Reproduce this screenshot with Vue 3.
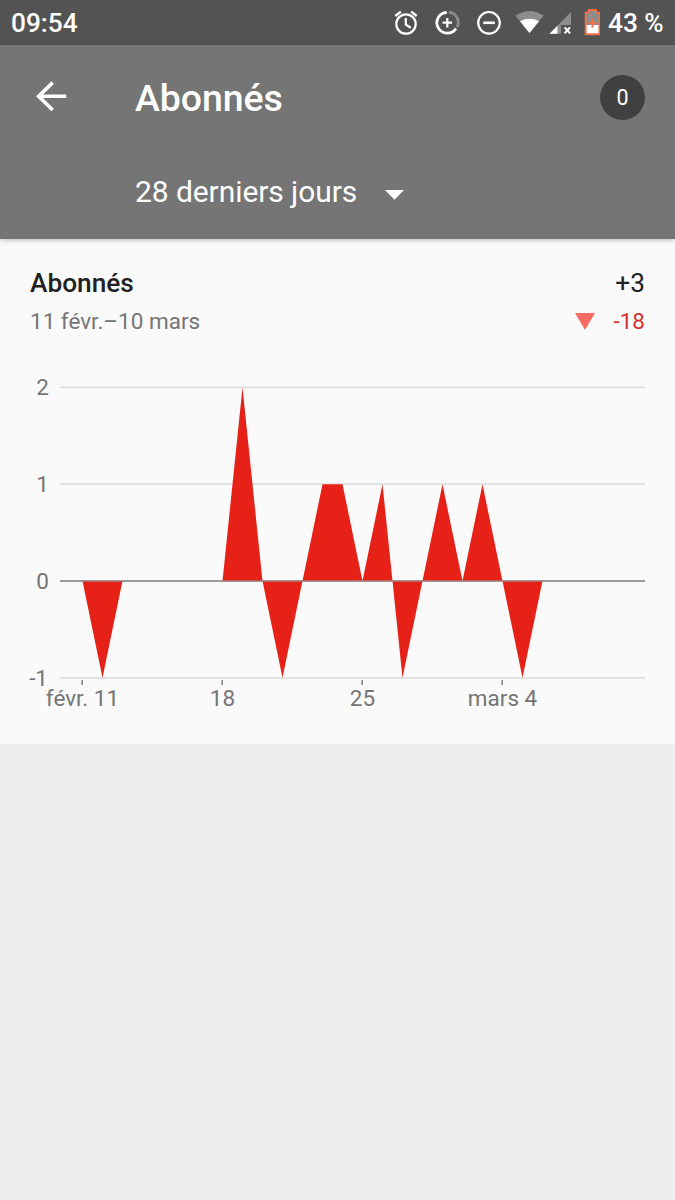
<script setup>
import { computed } from 'vue'

const values = [0, -1, 0, 0, 0, 0, 0, 0, 2, 0, -1, 0, 1, 1, 0, 1, -1, 0, 1, 0, 1, 0, -1, 0]
const gridValues = [2, 1, 0, -1]
const ticks = [
  { day: 0, label: 'févr. 11' },
  { day: 7, label: '18' },
  { day: 14, label: '25' },
  { day: 21, label: 'mars 4' }
]

function x(day) {
  return 82.5 + day * 20
}

function y(value) {
  return 221 - value * 96.8
}

const area = computed(() => {
  const points = values.map((value, day) => `${x(day)},${y(value)}`)
  return [`${x(0)},${y(0)}`, ...points, `${x(values.length - 1)},${y(0)}`].join(' ')
})
</script>

<template>
  <div class="screen">
    <div class="status-bar">
      <span class="time">09:54</span>
      <svg class="status-icons" width="210" height="45" viewBox="390 0 210 45">
        <!-- alarm -->
        <g fill="none" stroke="#fff" stroke-width="2.2">
          <circle cx="406" cy="24" r="9.7" />
          <path d="M405.8 18v6.7l5 3" />
          <path d="M395.3 16l5.5-4.4M416.7 16l-5.5-4.4" stroke-width="2.4" />
        </g>
        <!-- data saver -->
        <g fill="none" stroke="#fff">
          <path d="M449 12.2a10.4 10.4 0 0 1 8.2 14.9" stroke="#8b8b8b" stroke-width="2.8" />
          <path d="M446.8 12.3a10.4 10.4 0 1 0 9.2 16.1" stroke-width="2.8" />
          <path d="M447.3 18v9.4M442.6 22.7h9.4" stroke-width="2.2" />
        </g>
        <!-- do not disturb -->
        <g fill="none" stroke="#fff" stroke-width="2.2">
          <circle cx="489" cy="22.8" r="10.8" />
          <path d="M483.2 22.8h11.6" stroke-width="2.6" />
        </g>
        <!-- wifi -->
        <path d="M515.3 15.6q14.2-9.4 28.4 0L529.5 33z" fill="#8d8d8d" />
        <path d="M520 21.2q9.6-4.7 19 0L529.5 33z" fill="#fff" />
        <!-- mobile signal -->
        <path d="M549.5 33.8L571 12v13h-10v8.8z" fill="#8d8d8d" />
        <path d="M549.5 33.8L557.5 25.8v8z" fill="#fff" />
        <path d="M564.6 27.4l5.4 5.8M570 27.4l-5.4 5.8" stroke="#fff" stroke-width="2" />
        <!-- battery -->
        <path d="M585.7 12.5h3.3V10h7v2.5h3.4v22h-13.7z" fill="#8d8d8d" />
        <path d="M586 25h13.5v9H586z" fill="#fff" />
        <path d="M585.7 12.5h3.3V10h7v2.5h3.4v21.7h-13.7z" fill="none" stroke="#f0704a" stroke-width="1.9" />
        <path d="M592.5 18.5v9M588.7 23h7.6" stroke="#f0704a" stroke-width="2" />
      </svg>
      <span class="battery">43 %</span>
    </div>

    <header class="app-bar">
      <div class="title-row">
        <svg class="back" width="32" height="32" viewBox="0 0 32 32">
          <path d="M31.3 15.3H4M17.7 1.6L3.6 15.3l14.1 13.7" fill="none" stroke="#fff" stroke-width="3.6" />
        </svg>
        <h1>Abonnés</h1>
        <span class="badge">0</span>
      </div>
      <div class="period">
        <span>28 derniers jours</span>
        <svg width="19" height="10" viewBox="0 0 19 10">
          <path d="M0 0h19L9.5 9.7z" fill="#fff" />
        </svg>
      </div>
    </header>

    <main class="card">
      <div class="row heading">
        <h2>Abonnés</h2>
        <span>+3</span>
      </div>
      <div class="row dates">
        <span>11 févr.–10 mars</span>
        <span class="change">
          <svg width="20" height="17" viewBox="0 0 20 17">
            <path d="M0 0h20L10 17z" fill="#f66c64" />
          </svg>
          -18
        </span>
      </div>
      <svg class="chart" width="675" height="384" viewBox="0 0 675 384">
        <g v-for="value in gridValues" :key="value">
          <path :d="`M60 ${y(value)}H645`" :class="value === 0 ? 'zero-line' : 'grid-line'" />
          <text :x="value < 0 ? 48 : 49" :y="y(value) + 8" text-anchor="end">{{ value }}</text>
        </g>
        <polygon :points="area" fill="#e62117" />
        <path :d="`M60 ${y(0)}H645`" class="zero-line overlay" />
        <g v-for="tick in ticks" :key="tick.day">
          <path :d="`M${x(tick.day) - 0.3} 320v5`" class="tick" />
          <text :x="x(tick.day)" y="346" text-anchor="middle">{{ tick.label }}</text>
        </g>
      </svg>
    </main>
  </div>
</template>

<style>
body {
  margin: 0;
  background: #eee;
}
</style>

<style scoped>
.screen {
  min-height: 1200px;
  background: #eee;
  font-family: Roboto, "Liberation Sans", sans-serif;
}
.screen svg {
  display: block;
  flex-shrink: 0;
}
.status-bar {
  display: flex;
  align-items: center;
  box-sizing: border-box;
  height: 45px;
  padding: 0 11px;
  background: #535353;
  color: #fff;
  font-size: 26.25px;
  font-weight: 500;
  line-height: 46px;
}
.time {
  padding-top: 1px;
}
.status-icons {
  margin-left: auto;
}
.battery {
  width: 56px;
  margin-left: 8px;
  padding-top: 1px;
  white-space: nowrap;
}
.app-bar {
  position: relative;
  box-sizing: border-box;
  height: 194px;
  background: #757575;
  color: #fff;
  box-shadow: 0 1px 5px rgba(0, 0, 0, 0.25);
}
.title-row {
  display: flex;
  align-items: center;
  height: 104px;
  padding: 0 30px 0 35px;
}
h1 {
  margin: 2px 0 0 68px;
  font-size: 37.5px;
  font-weight: 500;
  line-height: 44px;
  letter-spacing: -0.1px;
}
.badge {
  width: 45px;
  height: 45px;
  margin-left: auto;
  border-radius: 50%;
  background: #404040;
  font-size: 21.5px;
  line-height: 46px;
  text-align: center;
}
.period {
  display: flex;
  align-items: center;
  gap: 28px;
  height: 84px;
  padding-left: 135px;
  font-size: 30px;
  letter-spacing: -0.08px;
}
.period svg {
  margin-top: 8px;
}
.card {
  box-sizing: border-box;
  height: 505px;
  padding-top: 26px;
  background: #fafafa;
  color: #212121;
}
.row {
  display: flex;
  align-items: center;
  justify-content: space-between;
  padding: 0 30px;
}
.heading {
  height: 36px;
  font-size: 26.25px;
}
h2 {
  margin: 0;
  font-size: 26.25px;
  font-weight: 500;
}
.dates {
  height: 40px;
  color: #757575;
  font-size: 22.5px;
}
.change {
  display: flex;
  align-items: center;
  gap: 18px;
  color: #d3302f;
}
.chart {
  margin-top: 19px;
}
.chart text {
  fill: #757575;
  font-size: 22.5px;
}
.grid-line {
  stroke: #dedede;
  stroke-width: 1.8;
}
.zero-line {
  stroke: #9b9b9b;
  stroke-width: 1.8;
}
.overlay {
  opacity: 0.5;
}
.tick {
  stroke: #858585;
  stroke-width: 1.6;
}
</style>
